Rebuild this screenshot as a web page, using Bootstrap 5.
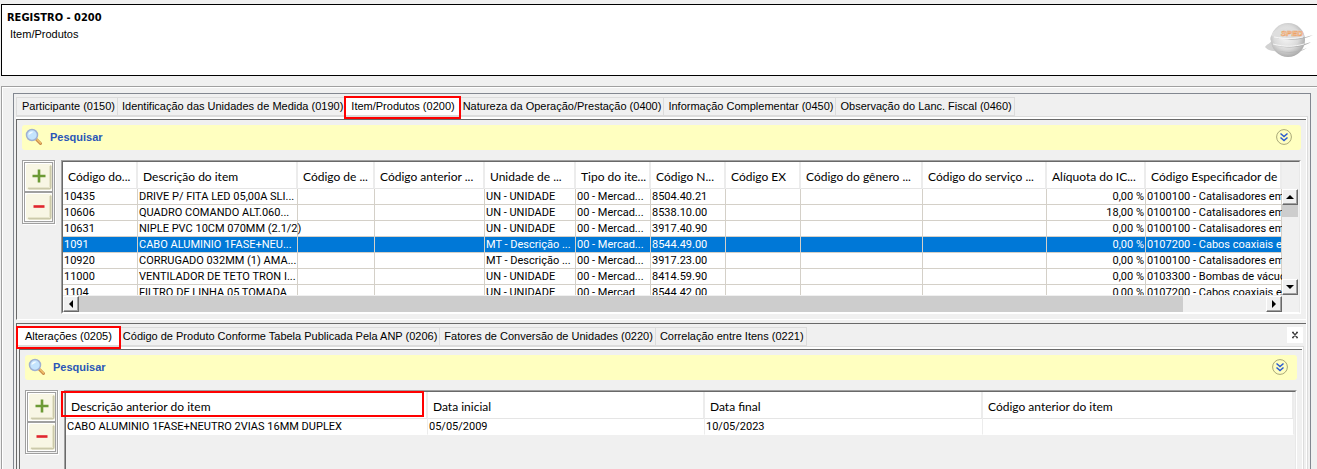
<!DOCTYPE html>
<html lang="pt-BR">
<head>
<meta charset="utf-8">
<meta name="viewport" content="width=device-width, initial-scale=1">
<title>Registro - 0200</title>
<link href="https://cdn.jsdelivr.net/npm/bootstrap@5.3.0/dist/css/bootstrap.min.css" rel="stylesheet">
<style>
  :root { --face: #f0f0f0; --dark: #696969; --mid: #a0a0a0; --line: #d4d0c8; --mark: #f00; }
  body { background: var(--face); color: #000; font: 11px/14px "Liberation Sans", Arial, sans-serif; }
  button { color: inherit; font: inherit; }
  .page-head { margin: 4px 0 10px 1px; height: 72px; border: 1px solid #000; border-right: 0; background: #fff; padding: 5px 2px 0 5px; }
  .page-head h1 { font: bold 11px/15px "DejaVu Sans Condensed", "DejaVu Sans", sans-serif; }
  .page-head p { padding: 2px 0 0 3px; }
  .shell { margin-left: 1px; border: solid var(--mid); border-width: 1px 0 0 1px; box-shadow: inset 1px 1px #fff; padding: 6px 6px 0 11px; }
  .shell-in { border: 1px solid #828790; border-bottom: 0; padding: 3px 2px 0 2px; }

  .tabs { height: 19px; }
  .tabs .tab { border: 1px solid #dcdcdc; border-left: 0; background: var(--face); padding: 0 2px 0 4px; line-height: 17px; white-space: nowrap; border-radius: 0; }
  .tabs .tab:first-child { border-left: 1px solid #dcdcdc; padding-left: 5px; }
  .tabs .tab.on { background: #fff; position: relative; padding: 0 5px; }
  .tabs .tab.on:first-child { padding: 0 8px 0 7px; }
  .tabs .tab.on::after { content: ""; position: absolute; inset: -2px -1px -4px -2px; border: 2px solid var(--mark); z-index: 2; }
  .tabs .tab.on + .tab { padding-left: 2px; }
  .page { border: 1px solid #dcdcdc; border-width: 1px 1px 0 0; background: #fff; padding: 2px 1px 0 0; }
  .page-in { background: var(--face); border: solid var(--dark); border-width: 1px 0 0 1px; padding: 5px 5px 0; }

  .search { background: #ffffc0; height: 25px; border-radius: 3px; padding: 0 9px 2px 3px; margin-bottom: 10px; gap: 7px; }
  .search a { color: #2a56b8; font: bold 11px/14px "Liberation Sans", Arial, sans-serif; text-decoration: none; }
  .search svg, .tool svg { display: block; }
  .tools { border: 1px solid var(--mid); box-shadow: inset 1px 1px #fff, 1px 1px #fff; padding: 1px; width: 33px; margin-right: 6px; }
  .tool { border: 1px solid var(--mid); padding: 1px; background: #fff; height: 30px; border-radius: 0; }

  .grid-box { border: 1px solid; border-color: var(--mid) #fff #fff var(--mid); }
  .grid-box > .inner { border: 1px solid; border-color: var(--dark) #e8e8e8 #fff var(--dark); }
  .view { height: 133px; overflow: hidden; background: #fff; }
  .data { table-layout: fixed; width: 100%; border-collapse: separate; border-spacing: 0; }
  .data th { height: 27px; padding: 4px 0 0 5px; font: 12px/18px Lato, "Open Sans", sans-serif; border-right: 2px solid #ececec; border-bottom: 1px solid #e5e5e5; background: #fff; white-space: nowrap; }
  .data td { height: 16px; padding: 0 1px; font-family: Roboto, "Liberation Sans", sans-serif; line-height: 15px; border-right: 1px solid var(--line); border-bottom: 1px solid var(--line); background: #fff; white-space: nowrap; }
  .data .num { text-align: right; }
  .data tr.sel td { background: #0078d7; color: #fff; }
  .plain td { border-right-color: #ececec; border-bottom-color: #fff; }
  .plain .hot { position: relative; }
  .plain .hot::after { content: ""; position: absolute; inset: -1px 2px 1px -5px; border: 2px solid var(--mark); }
  .sub-view { min-height: 90px; margin-right: 1px; }

  .vbar { width: 17px; padding: 27px 1px 0 0; }
  .hbar { height: 17px; padding: 1px 17px 0 0; }
  .arrow { width: 16px; height: 16px; background: var(--face); border: 1px solid; border-color: #fff var(--dark) var(--dark) #fff; box-shadow: inset -1px -1px var(--mid); border-radius: 0; }
  .arrow svg { display: block; }
  .thumb { background: #cdcdcd; }
  .upper { border-bottom: 1px solid #fff; padding-bottom: 5px; }
  .lower-wrap { background: var(--face); }
  .lower { margin-top: 3px; border: solid var(--dark); border-width: 1px 0 0 1px; padding: 3px 2px 0 0; }
  .lower .page { margin-left: 2px; }
  .close-tab { width: 16px; height: 16px; background: #fff; margin-right: 1px; }
  .close-tab svg { display: block; }
</style>
</head>
<body class="vh-100 overflow-hidden d-flex flex-column">

<svg class="d-none" xmlns="http://www.w3.org/2000/svg">
  <symbol id="lens" viewBox="0 0 18 18">
    <path d="M11.500 11.500l4 4" stroke="#c98a4a" stroke-width="3" stroke-linecap="round"/>
    <path d="M12 11.500l3.500 3.500" stroke="#f3c46b" stroke-width="1.200" stroke-linecap="round"/>
    <circle cx="7" cy="7" r="5.500" fill="#c4e4fd" stroke="#9fb0d2" stroke-width="1.500"/>
    <path d="M3.500 7a3.500 3.500 0 0 1 5-3.200C7 5 5.500 6 3.500 7z" fill="#f4fbff"/>
  </symbol>
  <symbol id="down" viewBox="0 0 16 16">
    <circle cx="8" cy="8" r="7.400" fill="none" stroke="#a8a878"/>
    <path d="M4.500 4.500L8 7.500l3.500-3M4.500 8.500L8 11.500l3.500-3" fill="none" stroke="#2a5bd0" stroke-width="1.500"/>
  </symbol>
  <symbol id="face" viewBox="0 0 26 26">
    <rect x="0" y="0" width="26" height="26" rx="2" fill="#f8f6e4"/>
    <path d="M25.500 2v21.500a2 2 0 0 1-2 2H3L1.500 24H24V1z" fill="#cbc9aa"/>
    <path d="M23.500 2v21.500H2" fill="none" stroke="#e7e5ca"/>
  </symbol>
  <symbol id="plus" viewBox="0 0 26 26"><use href="#face"/><path d="M13 5.500v13M6.500 12h13" stroke="#6c9a35" stroke-width="2.600"/></symbol>
  <symbol id="minus" viewBox="0 0 26 26"><use href="#face"/><path d="M7.500 12.500h11" stroke="#e0262d" stroke-width="2.600"/></symbol>
</svg>

<header class="page-head d-flex justify-content-between flex-shrink-0">
  <div>
    <h1 class="m-0">REGISTRO - 0200</h1>
    <p class="m-0">Item/Produtos</p>
  </div>
  <svg width="50" height="40" viewBox="0 0 50 40" class="mt-2" role="img" aria-label="SPED">
    <defs>
      <radialGradient id="ball" cx=".45" cy=".42" r=".6"><stop offset="0" stop-color="#f6f6f6"/><stop offset=".6" stop-color="#dadada"/><stop offset="1" stop-color="#a8a8a8"/></radialGradient>
    </defs>
    <path d="M9 15c-3 2-5 6-3 8 0 2-4 3-6 6 3 4 10 5 18 4V14z" fill="#d2d2d2"/>
    <circle cx="23" cy="22" r="17" fill="url(#ball)"/>
    <path d="M8 14c8-5 20-5 30 0l1 5c-10 2-20 2-33-1z" fill="#dedede"/>
    <path d="M8 20c12 2 24 2 40-3-9 5-22 6-40 3zM8 27c12 3 24 2 38-3-8 6-24 7-38 3zM14 33c10 2 18 1 28-3-7 5-19 6-28 3z" fill="#b4b4b4"/>
    <path d="M9 19c12 2 20 2 29 0M8 26c12 3 20 3 31 0" fill="none" stroke="#f6f6f6"/>
    <text x="16" y="18" font-family="Liberation Sans" font-size="8" font-weight="bold" font-style="italic" fill="#f7e2d0" stroke="#eda368" stroke-width=".6">SPED</text>
  </svg>
</header>

<main class="shell flex-grow-1 d-flex flex-column">
  <div class="shell-in flex-grow-1 d-flex flex-column">

    <div class="tabs d-flex" role="tablist">
      <button class="tab" role="tab">Participante (0150)</button>
      <button class="tab" role="tab">Identificação das Unidades de Medida (0190)</button>
      <button class="tab on" role="tab" aria-selected="true">Item/Produtos (0200)</button>
      <button class="tab" role="tab">Natureza da Operação/Prestação (0400)</button>
      <button class="tab" role="tab">Informação Complementar (0450)</button>
      <button class="tab" role="tab">Observação do Lanc. Fiscal (0460)</button>
    </div>

    <div class="page flex-grow-1 d-flex flex-column">
      <section class="page-in upper">
        <div class="search d-flex align-items-center">
          <svg width="18" height="18"><use href="#lens"/></svg>
          <a href="#" class="me-auto">Pesquisar</a>
          <button class="border-0 bg-transparent p-0" aria-label="Expandir pesquisa"><svg width="16" height="16"><use href="#down"/></svg></button>
        </div>
        <div class="d-flex align-items-start">
          <div class="tools d-flex flex-column flex-shrink-0">
            <button class="tool" aria-label="Adicionar"><svg width="26" height="26"><use href="#plus"/></svg></button>
            <button class="tool" aria-label="Remover"><svg width="26" height="26"><use href="#minus"/></svg></button>
          </div>
          <div class="grid-box flex-grow-1 overflow-hidden">
            <div class="inner">
              <div class="d-flex">
                <div class="view flex-grow-1">
                  <table class="data">
                    <colgroup><col style="width:75px"><col style="width:160px"><col style="width:77px"><col style="width:110px"><col style="width:91px"><col style="width:75px"><col style="width:75px"><col style="width:75px"><col style="width:122px"><col style="width:124px"><col style="width:99px"><col></colgroup>
                    <thead><tr><th>Código do...</th><th>Descrição do item</th><th>Código de ...</th><th>Código anterior ...</th><th>Unidade de ...</th><th>Tipo do ite...</th><th>Código N...</th><th>Código EX</th><th>Código do gênero ...</th><th>Código do serviço ...</th><th>Alíquota do IC...</th><th>Código Especificador de</th></tr></thead>
                    <tbody>
                      <tr><td>10435</td><td>DRIVE P/ FITA LED 05,00A SLI...</td><td></td><td></td><td>UN - UNIDADE</td><td>00 - Mercad...</td><td>8504.40.21</td><td></td><td></td><td></td><td class="num">0,00 %</td><td>0100100 - Catalisadores em</td></tr>
                      <tr><td>10606</td><td>QUADRO COMANDO ALT.060...</td><td></td><td></td><td>UN - UNIDADE</td><td>00 - Mercad...</td><td>8538.10.00</td><td></td><td></td><td></td><td class="num">18,00 %</td><td>0100100 - Catalisadores em</td></tr>
                      <tr><td>10631</td><td>NIPLE PVC 10CM 070MM (2.1/2)</td><td></td><td></td><td>UN - UNIDADE</td><td>00 - Mercad...</td><td>3917.40.90</td><td></td><td></td><td></td><td class="num">0,00 %</td><td>0100100 - Catalisadores em</td></tr>
                      <tr class="sel"><td>1091</td><td>CABO ALUMINIO 1FASE+NEU...</td><td></td><td></td><td>MT - Descrição ...</td><td>00 - Mercad...</td><td>8544.49.00</td><td></td><td></td><td></td><td class="num">0,00 %</td><td>0107200 - Cabos coaxiais e</td></tr>
                      <tr><td>10920</td><td>CORRUGADO 032MM (1) AMA...</td><td></td><td></td><td>MT - Descrição ...</td><td>00 - Mercad...</td><td>3917.23.00</td><td></td><td></td><td></td><td class="num">0,00 %</td><td>0100100 - Catalisadores em</td></tr>
                      <tr><td>11000</td><td>VENTILADOR DE TETO TRON I...</td><td></td><td></td><td>UN - UNIDADE</td><td>00 - Mercad...</td><td>8414.59.90</td><td></td><td></td><td></td><td class="num">0,00 %</td><td>0103300 - Bombas de vácuo</td></tr>
                      <tr><td>1104</td><td>FILTRO DE LINHA 05 TOMADA</td><td></td><td></td><td>UN - UNIDADE</td><td>00 - Mercad</td><td>8544.42.00</td><td></td><td></td><td></td><td class="num">0,00 %</td><td>0107200 - Cabos coaxiais e</td></tr>
                    </tbody>
                  </table>
                </div>
                <div class="vbar d-flex flex-column flex-shrink-0">
                  <button class="arrow p-0" aria-label="Rolar para cima"><svg width="14" height="14"><path d="M3 9l4-4 4 4z"/></svg></button>
                  <div class="thumb" style="height:12px"></div>
                  <button class="arrow p-0 mt-auto" aria-label="Rolar para baixo"><svg width="14" height="14"><path d="M3 5l4 4 4-4z"/></svg></button>
                </div>
              </div>
              <div class="hbar d-flex">
                <button class="arrow p-0 flex-shrink-0" aria-label="Rolar para a esquerda"><svg width="14" height="14"><path d="M9 3L5 7l4 4z"/></svg></button>
                <div class="flex-grow-1 d-flex"><div class="thumb" style="width:93%"></div></div>
                <button class="arrow p-0 flex-shrink-0" aria-label="Rolar para a direita"><svg width="14" height="14"><path d="M5 3l4 4-4 4z"/></svg></button>
              </div>
            </div>
          </div>
        </div>
      </section>

      <div class="lower-wrap flex-grow-1 d-flex flex-column">
        <section class="lower flex-grow-1 d-flex flex-column">
          <div class="tabs d-flex" role="tablist">
            <button class="tab on" role="tab" aria-selected="true">Alterações (0205)</button>
            <button class="tab" role="tab">Código de Produto Conforme Tabela Publicada Pela ANP (0206)</button>
            <button class="tab" role="tab">Fatores de Conversão de Unidades (0220)</button>
            <button class="tab" role="tab">Correlação entre Itens (0221)</button>
            <button class="close-tab border-0 p-0 ms-auto" aria-label="Fechar"><svg width="16" height="16"><path d="M6 5.500l4 5M10 5.500l-4 5M5 5.500h2M9 5.500h2M5 10.500h2M9 10.500h2" stroke="#444" stroke-width="1.300"/></svg></button>
          </div>
          <div class="page flex-grow-1 d-flex flex-column">
            <div class="page-in flex-grow-1">
              <div class="search d-flex align-items-center">
                <svg width="18" height="18"><use href="#lens"/></svg>
                <a href="#" class="me-auto">Pesquisar</a>
                <button class="border-0 bg-transparent p-0" aria-label="Expandir pesquisa"><svg width="16" height="16"><use href="#down"/></svg></button>
              </div>
              <div class="d-flex align-items-start">
                <div class="tools d-flex flex-column flex-shrink-0">
                  <button class="tool" aria-label="Adicionar"><svg width="26" height="26"><use href="#plus"/></svg></button>
                  <button class="tool" aria-label="Remover"><svg width="26" height="26"><use href="#minus"/></svg></button>
                </div>
                <div class="grid-box flex-grow-1">
                  <div class="inner">
                    <div class="sub-view">
                      <table class="data plain">
                        <colgroup><col style="width:362px"><col style="width:277px"><col style="width:278px"><col></colgroup>
                        <thead><tr><th class="hot">Descrição anterior do item</th><th>Data inicial</th><th>Data final</th><th>Código anterior do item</th></tr></thead>
                        <tbody><tr><td>CABO ALUMINIO 1FASE+NEUTRO 2VIAS 16MM DUPLEX</td><td>05/05/2009</td><td>10/05/2023</td><td></td></tr></tbody>
                      </table>
                    </div>
                  </div>
                </div>
              </div>
            </div>
          </div>
        </section>
      </div>
    </div>
  </div>
</main>

<script src="https://cdn.jsdelivr.net/npm/bootstrap@5.3.0/dist/js/bootstrap.bundle.min.js"></script>
</body>
</html>
